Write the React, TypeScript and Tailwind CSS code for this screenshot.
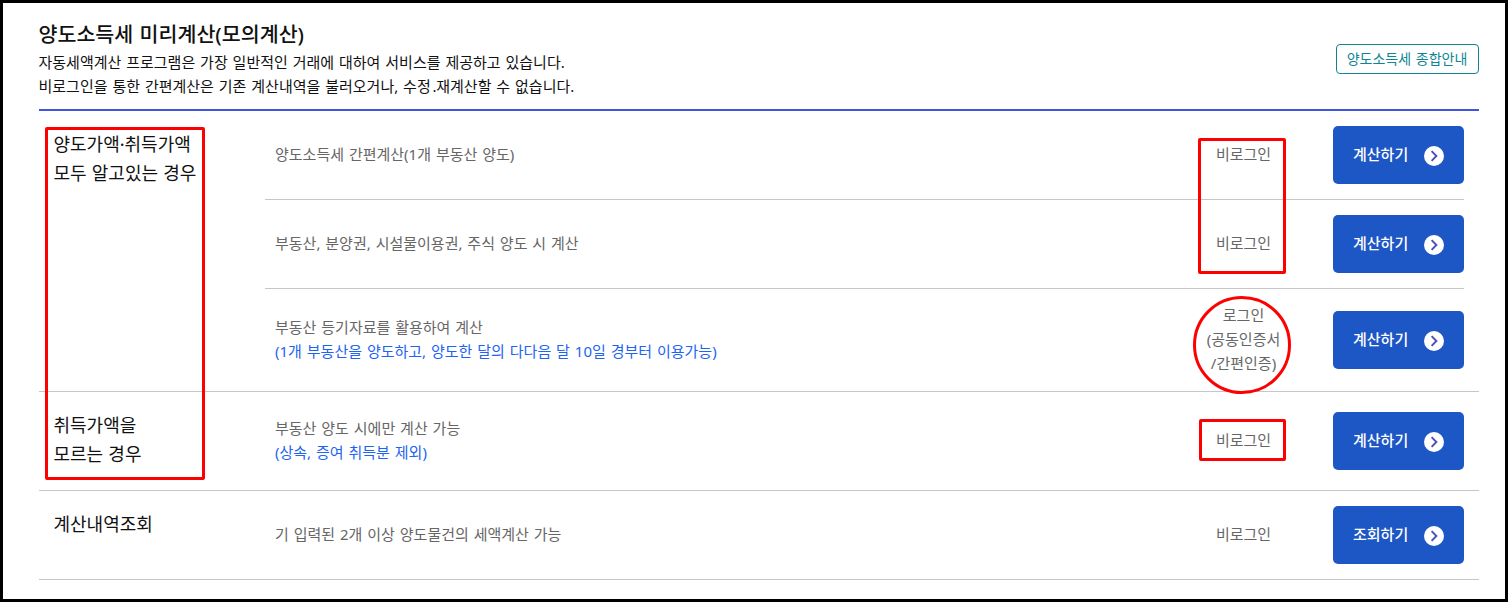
import type { ReactNode } from 'react';

function ActionButton({ label }: { label: string }) {
  return (
    <button
      type="button"
      className="flex h-[58px] w-[131px] shrink-0 items-center justify-between rounded-[5px] bg-[#1d56c5] px-5 text-[15px] leading-6 font-medium text-white"
    >
      <span className="pb-[2px]">{label}</span>
      <svg viewBox="0 0 20 20" className="mt-[2px] size-5" aria-hidden="true">
        <circle cx="10" cy="10" r="10" fill="#fff" />
        <path d="M7.6 5.2 L12.4 10 L7.6 14.8" fill="none" stroke="#4a4fb5" strokeWidth="1.9" />
      </svg>
    </button>
  );
}

type RowProps = { login: ReactNode; action: string; size: string; children: ReactNode };

function Row({ login, action, size, children }: RowProps) {
  return (
    <div className={`flex items-center ${size}`}>
      <div className="flex-1 pb-[2px] pl-[10px]">{children}</div>
      <div className="w-[179px] pb-[2px] text-center">{login}</div>
      <ActionButton label={action} />
    </div>
  );
}

function Group({ title, children }: { title: ReactNode; children: ReactNode }) {
  return (
    <section className="flex border-b border-[#c6c6c6] pr-[15px]">
      <h2 className="w-[226px] shrink-0 pt-[19px] pl-[14.5px] text-[18px] leading-[29px] text-[#111] [word-spacing:0.5px]">{title}</h2>
      <div className="flex-1">{children}</div>
    </section>
  );
}

export default function App() {
  return (
    <main className="relative h-[602px] w-[1508px] overflow-hidden border-[3px] border-black bg-white px-9 pr-[26px] font-['Noto_Sans','Noto_Sans_CJK_KR',sans-serif] text-[15px] leading-6 [word-spacing:1px] text-[#666]">
      <header className="flex h-[108px] items-start justify-between border-b-2 border-[#4253e0] pt-[15px] text-[#111]">
        <div className="-ml-[0.5px]">
          <h1 className="text-[20.6px] leading-8 font-medium">양도소득세 미리계산(모의계산)</h1>
          <p>자동세액계산 프로그램은 가장 일반적인 거래에 대하여 서비스를 제공하고 있습니다.</p>
          <p>
            비로그인을 통한 간편계산은 기존 계산내역을 불러오거나, 수정<span className="tracking-[-2px]">․</span>재계산할 수 없습니다.
          </p>
        </div>
        <a className="mt-[26px] flex h-[30px] w-[143px] items-center justify-center rounded-[4px] border border-[#0e8593] pr-px text-[14px] text-[#0e8593]">
          양도소득세 종합안내
        </a>
      </header>

      <Group title={<>양도가액·취득가액<br />모두 알고있는 경우</>}>
        <Row size="h-[89px] border-b border-[#c6c6c6]" login="비로그인" action="계산하기">
          양도소득세 간편계산(1개 부동산 양도)
        </Row>
        <Row size="h-[89px] border-b border-[#c6c6c6]" login="비로그인" action="계산하기">
          부동산, 분양권, 시설물이용권, 주식 양도 시 계산
        </Row>
        <Row size="h-[102px]" login={<>로그인<br />(공동인증서<br />/간편인증)</>} action="계산하기">
          <p>부동산 등기자료를 활용하여 계산</p>
          <p className="text-[#1d64f2]">(1개 부동산을 양도하고, 양도한 달의 다다음 달 10일 경부터 이용가능)</p>
        </Row>
      </Group>

      <Group title={<>취득가액을<br />모르는 경우</>}>
        <Row size="h-[98px]" login="비로그인" action="계산하기">
          <p>부동산 양도 시에만 계산 가능</p>
          <p className="text-[#1d64f2]">(상속, 증여 취득분 제외)</p>
        </Row>
      </Group>

      <Group title="계산내역조회">
        <Row size="h-[88px]" login="비로그인" action="조회하기">
          기 입력된 2개 이상 양도물건의 세액계산 가능
        </Row>
      </Group>

      <div className="absolute top-[124px] left-[42px] h-[353px] w-[160px] rounded-[2px] border-[3px] border-[#ff0000]" />
      <div className="absolute top-[135px] left-[1195px] h-[136px] w-[88px] rounded-[2px] border-[3px] border-[#ff0000]" />
      <div className="absolute top-[293px] left-[1190px] size-[98px] rounded-full border-[3px] border-[#ff0000]" />
      <div className="absolute top-[416px] left-[1196px] h-[42px] w-[87px] rounded-[2px] border-[3px] border-[#ff0000]" />
    </main>
  );
}
